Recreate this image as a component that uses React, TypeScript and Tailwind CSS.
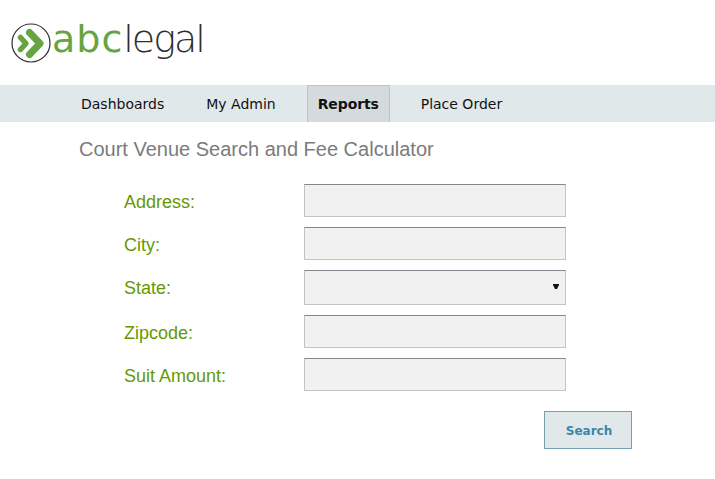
import { useState } from "react";

const navItems = ["Dashboards", "My Admin", "Reports", "Place Order"];

const fieldClass =
    "block w-[262px] bg-[#f1f1f1] border border-[#c3c3c6] border-t-[#85858f] outline-none";

function Logo() {
    return (
        <div className="flex items-center h-[85px] pl-[11px]">
            <svg width="40" height="42" viewBox="0 0 40 42" className="shrink-0">
                <circle cx="20" cy="21" r="19" fill="none" stroke="#2e2e2e" strokeWidth="1.2" />
                <path d="M9.5 15.5 L15 21.5 L9.5 27.5" fill="none" stroke="#66a441" strokeWidth="5.5" strokeLinecap="round" strokeLinejoin="round" />
                <path d="M18.5 10.5 L29 21.5 L18.5 32.5" fill="none" stroke="#66a441" strokeWidth="7" strokeLinecap="round" strokeLinejoin="round" />
            </svg>
            <div className="flex items-baseline ml-[1px] leading-none font-['DejaVu_Sans',sans-serif] text-[38px] mt-[-7px]">
                <span className="text-[#66a441] tracking-[1px]">abc</span>
                <span className="text-[#2e2e2e] font-extralight tracking-[-2px]">legal</span>
            </div>
        </div>
    );
}

function Nav() {
    return (
        <nav className="flex h-[37px] bg-[#e1e8ea] pl-[64px] font-['DejaVu_Sans',sans-serif] text-[14px] text-[#111]">
            {navItems.map((item) =>
                item === "Reports" ? (
                    <a key={item} className="flex items-center h-full w-[83px] pl-[10px] ml-[6px] mr-[14px] font-bold tracking-[-0.1px] bg-[#d5dadc] border border-b-0 border-[#bcc2c6]">
                        {item}
                    </a>
                ) : (
                    <a key={item} className="flex items-center h-full pt-[1px] px-[17px] mr-[8px]">
                        {item}
                    </a>
                )
            )}
        </nav>
    );
}

function Row({ label, mt, pad = "pt-[3px]", children }: { label: string; mt: string; pad?: string; children: React.ReactNode }) {
    return (
        <div className={`flex items-center ${mt}`}>
            <label className={`w-[180px] ${pad} text-[18px] text-[#669900]`}>{label}</label>
            {children}
        </div>
    );
}

export default function App() {
    const [address, setAddress] = useState("");

    return (
        <div className="min-h-[479px] bg-white font-['Liberation_Sans',Arial,sans-serif]">
            <Logo />
            <Nav />
            <h1 className="pl-[79px] mt-[15px] text-[20px] leading-[24px] text-[#7b7b7b]">
                Court Venue Search and Fee Calculator
            </h1>

            <form className="pl-[124px] mt-[23px]">
                <Row label="Address:" mt="mt-0">
                    <input className={`${fieldClass} h-[33px]`} value={address} onChange={(e) => setAddress(e.target.value)} />
                </Row>
                <Row label="City:" mt="mt-[10px]">
                    <input className={`${fieldClass} h-[33px]`} />
                </Row>
                <Row label="State:" mt="mt-[10px]" pad="pt-[1px]">
                    <div className="relative">
                        <select className={`${fieldClass} h-[35px] appearance-none`} />
                        <svg width="6" height="5" viewBox="0 0 6 5" className="absolute right-[7px] top-[14px]">
                            <path d="M0 0 H6 V1 L4 5 H2 L0 1 Z" fill="#111" />
                        </svg>
                    </div>
                </Row>
                <Row label="Zipcode:" mt="mt-[10px]">
                    <input className={`${fieldClass} h-[33px]`} />
                </Row>
                <Row label="Suit Amount:" mt="mt-[10px]">
                    <input className={`${fieldClass} h-[33px]`} />
                </Row>
                <div className="pl-[420px] mt-[20px]">
                    <button type="button" className="w-[88px] h-[38px] pt-[2px] pl-[2px] bg-[#e1e8ea] border border-[#77a0b0] text-[12px] font-bold text-[#3b86ab] font-['DejaVu_Sans',sans-serif]">
                        Search
                    </button>
                </div>
            </form>
        </div>
    );
}
